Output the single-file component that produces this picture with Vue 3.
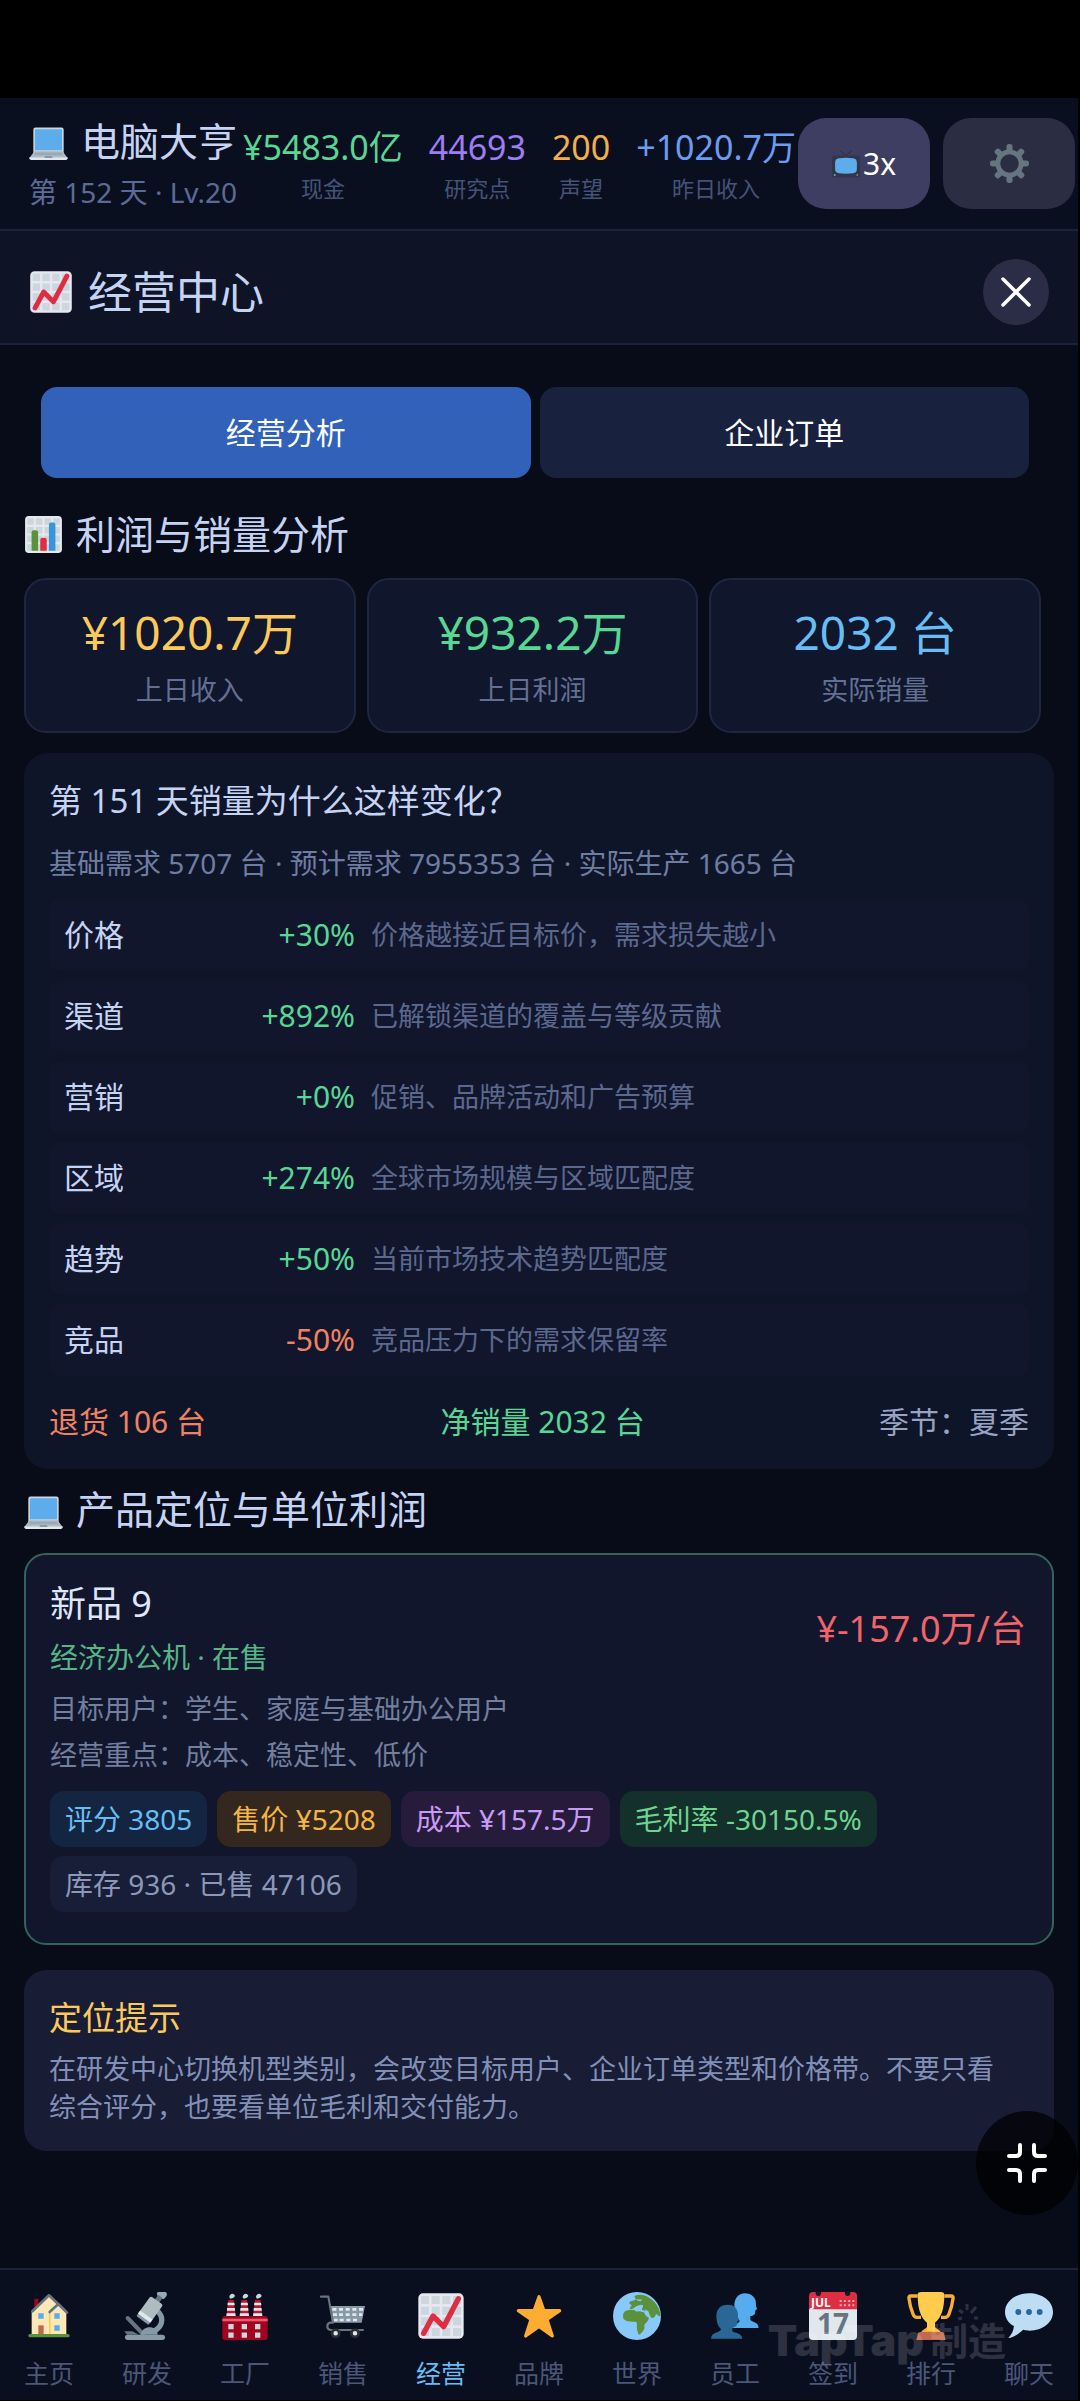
<template>
  <div class="screen">
    <svg class="sprite" aria-hidden="true">
      <symbol id="i-laptop" viewBox="0 -3 36 36">
        <path fill="#ccd6dd" d="M32 26a2 2 0 0 1-2 2H6a2 2 0 0 1-2-2V5a2 2 0 0 1 2-2h24a2 2 0 0 1 2 2z" />
        <path fill="#5dadec" d="M5.500 5.500Q5.500 4.500 6.500 4.500H29.500Q30.500 4.500 30.500 5.500V24H5.500z" />
        <path fill="#aebbc1" d="M5 25h26l4.500 6h-35z" />
        <path fill="#e1e8ed" d="M.3 30.500h35.400a2 2 0 0 1-2 2.500H2.300a2 2 0 0 1-2-2.500z" />
        <path fill="#9aaab4" d="M6 26h24l1.500 2.500h-27z" />
        <path fill="#8899a6" d="M15 29.300h6l.8 1.900h-7.600z" />
      </symbol>
      <symbol id="i-trend" viewBox="0 0 36 36">
        <rect x="1" y="1" width="34" height="34" rx="3.500" fill="#e6e7f0" />
        <path fill="#ccd6dd" d="M3 3h6v6H3zm8 0h6v6h-6zm8 0h6v6h-6zm8 0h6v6h-6zM3 11h6v6H3zm8 0h6v6h-6zm8 0h6v6h-6zm8 0h6v6h-6zM3 19h6v6H3zm8 0h6v6h-6zm8 0h6v6h-6zm8 0h6v6h-6zM3 27h6v6H3zm8 0h6v6h-6zm8 0h6v6h-6zm8 0h6v6h-6z" />
        <path fill="none" stroke="#dd2e44" stroke-width="4" stroke-linecap="round" stroke-linejoin="round" d="M5 31 12 18 20 26 31 5" />
      </symbol>
      <symbol id="i-bars" viewBox="0 0 36 36">
        <rect x="1" y="1" width="34" height="34" rx="3.500" fill="#e6e9ee" />
        <path fill="#ccd6dd" d="M3 3h6v6H3zm8 0h6v6h-6zm8 0h6v6h-6zm8 0h6v6h-6zM3 11h6v6H3zm8 0h6v6h-6zm8 0h6v6h-6zm8 0h6v6h-6zM3 19h6v6H3zm8 0h6v6h-6zm8 0h6v6h-6zm8 0h6v6h-6zM3 27h6v6H3zm8 0h6v6h-6zm8 0h6v6h-6zm8 0h6v6h-6z" />
        <path fill="#5c913b" d="M13 33H7V16a2 2 0 0 1 2-2h2a2 2 0 0 1 2 2z" />
        <path fill="#dd2e44" d="M21 33h-6V23a2 2 0 0 1 2-2h2a2 2 0 0 1 2 2z" />
        <path fill="#3b94d9" d="M29 33h-6V9a2 2 0 0 1 2-2h2a2 2 0 0 1 2 2z" />
      </symbol>
      <symbol id="i-tv" viewBox="0 0 36 36">
        <path fill="none" stroke="#31373d" stroke-width="1.500" stroke-linecap="round" d="M11 1l7 6 7-6" />
        <rect x="0" y="7" width="36" height="28" rx="3" fill="#31374a" />
        <path fill="#5dadec" d="M9 10.500q9-1 18 0 5 .5 5 6v8q0 5-5 5.500-9 1-18 0-5-.5-5-5.500v-8q0-5.500 5-6z" />
        <circle cx="3.500" cy="32" r="1.300" fill="#8899a6" />
        <circle cx="32.500" cy="32" r="1.300" fill="#a6794b" />
      </symbol>
      <symbol id="i-gear" viewBox="0 0 36 36">
        <g fill="#66757f">
          <rect v-for="a in [0, 45, 90, 135]" :key="a" x="15.200" y="0" width="5.600" height="36" rx="2.500" :transform="`rotate(${a} 18 18)`" />
          <circle cx="18" cy="18" r="13" />
        </g>
        <circle cx="18" cy="18" r="8.500" fill="#2b2e42" />
      </symbol>
      <symbol id="i-home" viewBox="0 0 36 36">
        <path fill="#a0041e" d="M7 8V5h3v6L7 13z" />
        <path fill="#ffe8b6" d="M5 14 18 2.500 31 14v19H5z" />
        <path fill="#ffcc4d" d="M18 14h1.200v19H18z" />
        <path fill="none" stroke="#66757f" stroke-width="2" stroke-linecap="round" stroke-linejoin="round" d="M5.500 14.500 18 2.500l9 8.500M18.500 15 25 9l6.500 6.500" />
        <path fill="#55acee" d="M10 16h4v4h-4zm12 0h4v4h-4zm0 9h4v4h-4z" />
        <path fill="#c1694f" d="M10 25h4v7h-4z" />
        <rect x="2.500" y="31.500" width="31" height="2.500" rx="1.200" fill="#5c913b" />
      </symbol>
      <symbol id="i-scope" viewBox="0 0 36 36">
        <path fill="none" stroke="#66757f" stroke-width="3" stroke-linecap="round" d="M3.500 19.500 15 31.500" />
        <path fill="none" stroke="#8899a6" stroke-width="4" stroke-linecap="round" d="M27 15.500c4 5 2 11-4 14" />
        <path fill="#8899a6" d="M13 32c1-4 4-5.500 7-5.500s6 2 6 5.500z" />
        <rect x="1.500" y="32" width="30" height="4" rx="2" fill="#8899a6" />
        <path fill="#66757f" d="M1 29.500h6l5 2.500H3z" />
        <g transform="rotate(36 19 14)">
          <rect x="16.500" y="-5" width="7" height="6" rx="2.500" fill="#99aab5" />
          <rect x="18" y="0" width="4" height="5" fill="#66757f" />
          <rect x="14" y="4" width="11.500" height="17" rx="1.500" fill="#aebbc1" />
          <rect x="14" y="17.500" width="11.500" height="3" fill="#e1e8ed" />
          <rect x="14" y="20.500" width="11.500" height="2" rx="1" fill="#8899a6" />
        </g>
      </symbol>
      <symbol id="i-factory" viewBox="0 0 36 36">
        <path fill="#be1931" d="M5.500 6h4l1.500 13H4zm10 0h4l1.500 13h-7zm10 0h4l1.500 13h-7z" />
        <path fill="#e1e8ed" d="M5 8h5l.3 2H4.800zm10 0h5l.3 2h-5.500zm10 0h5l.3 2h-5.500zM4.600 12h5.800l.2 2H4.400zm10 0h5.800l.2 2h-6.200zm10 0h5.800l.2 2h-6.200zM4.200 16h6.600l.2 2H4zm10 0h6.600l.2 2h-7zm10 0h6.600l.2 2h-7z" />
        <path fill="#ccd6dd" d="M7 5a2 2 0 1 1 3-3c1 1 0 2-1 2.500zm10 0a2 2 0 1 1 3-3c1 1 0 2-1 2.500zm10 0a2 2 0 1 1 3-3c1 1 0 2-1 2.500z" />
        <rect x="1" y="18" width="34" height="18" rx="2" fill="#a0041e" />
        <rect x="1" y="20" width="34" height="2" fill="#ea596e" />
        <path fill="#ccd6dd" d="M5.500 24h4v4h-4zm10 0h4v4h-4zm10 0h4v4h-4zm-20 6.300h4v4h-4zm10 0h4v4h-4zm10 0h4v4h-4z" />
      </symbol>
      <symbol id="i-cart" viewBox="0 0 36 36">
        <path fill="#8899a6" d="M8 10.500h26.500L32 23H10z" />
        <path fill="#e1e8ed" d="M10 12h3v2h-3zm5 0h3v2h-3zm5 0h3v2h-3zm5 0h3v2h-3zm5 0h3v2h-3zM10.500 16h3v2h-3zm4.500 0h3v2h-3zm5 0h3v2h-3zm5 0h3v2h-3zm5 0h2.500v2H30zM11 20h3v2h-3zm4.500 0h3v2h-3zm5 0h3v2h-3zm5 0h3v2h-3z" />
        <path fill="none" stroke="#66757f" stroke-width="1.600" stroke-linecap="round" stroke-linejoin="round" d="M1.500 3.500H7L10.500 23H8.500a2.800 2.800 0 0 0 0 5.500H33" />
        <g fill="#e1e8ed" stroke="#292f33" stroke-width="2">
          <circle cx="12.500" cy="31" r="2.700" />
          <circle cx="27" cy="31" r="2.700" />
        </g>
      </symbol>
      <symbol id="i-star" viewBox="0 0 36 36">
        <path fill="#ffac33" stroke="#ffac33" stroke-width="2.400" stroke-linejoin="round" d="M18 3.500 21.700 14H33.500L24 20.600 28 33 18 25.800 8 33l4-12.400L2.500 14h11.800z" />
      </symbol>
      <symbol id="i-globe" viewBox="0 0 36 36">
        <circle cx="18" cy="18" r="18" fill="#88c9f9" />
        <path fill="#5c913b" d="M9 14.500c2-1.500 5-1 7-1 1 1 2 1.500 3 1s3 .5 4 .5c1 2 2 3.500 4 4.500-.5 2-2 3.500-3.500 5 0 2 .5 2.500-.5 4-1 1.500-2 3-3.500 3.500-1-1-1-2.500-1.500-4.500s.5-3-.5-5c-2-.5-4 0-6-.5-2-.500-4-1.500-4-3.500S8 15.500 9 14.500z" />
        <path fill="#5c913b" d="M16 3c4-1.500 8-1 10.500 1 5 2.500 8.500 8 9.300 14-1.300.8-2.300-1-3.300-1.500-1 1-1.500 3.500-3 3-2-.5-2-3.500-4-5-1 0-2-1-3.500-1-1-.5 1-2 .5-3.500-1.500-1-3 0-4.500.5s-3 2.500-5 2.500c-1-.5.500-2 1-3-1-1-2.500-1.500-1.500-2.500s3.500-.5 4.500-2z" />
        <path fill="#88c9f9" d="M17 5.500c2-.5 3 .5 5 0l-1 1.500c-2 0-3-.5-4-1.500zM24 13l2.500 1.500 1.500 4-2-1.500z" />
      </symbol>
      <symbol id="i-staff" viewBox="0 0 36 36">
        <path fill="#55acee" d="M16 27c1-4 5-3 5.500-5.500C19 19 17.500 14 17.500 10c0-5 3-9 8-9 4 0 7.500 2.500 8 6 .5 2-.2 3 .8 5 .4 1-.4 1.500-1.100 1.700.2 3.300-1.200 4.300-3.700 4.300v3c2 2 6 1.500 6.200 6z" />
        <path fill="#2a6797" d="M0 35c.5-5.500 7-4 7.500-7C5 25.500 4 22 4 18c0-5 3-8.500 8.500-8.500 4.500 0 7 2.500 7.500 6 .5 2-.2 3 .8 5 .4 1-.4 1.500-1.100 1.700.3 3.300-1.200 4.300-3.700 4.300v3c2 1.500 7 1 7.500 5.500z" />
      </symbol>
      <symbol id="i-date" viewBox="0 0 36 36">
        <path fill="#e1e8ed" d="M0 11h36v22a3 3 0 0 1-3 3H3a3 3 0 0 1-3-3z" />
        <path fill="#dd2e44" d="M3 0h30a3 3 0 0 1 3 3v10H0V3a3 3 0 0 1 3-3z" />
        <path fill="#141828" d="M5 0h4v1a2 2 0 0 1-4 0zm22 0h4v1a2 2 0 0 1-4 0z" />
        <path fill="#f4abba" d="M23 6h1.500v1.500H23zm3.200 0h1.500v1.500h-1.500zm3.200 0h1.500v1.500h-1.500zm3.200 0H34v1.500h-1.500zM23 9.200h1.500v1.500H23zm3.200 0h1.500v1.500h-1.500zm3.200 0h1.500v1.500h-1.500zm3.200 0H34v1.500h-1.500z" />
        <text x="1.500" y="11" font-size="9" font-weight="700" fill="#fff">JUL</text>
        <text x="18" y="31.500" font-size="21" font-weight="700" text-anchor="middle" fill="#66757f">17</text>
      </symbol>
      <symbol id="i-cup" viewBox="0 0 36 36">
        <path fill="none" stroke="#ffac33" stroke-width="2.500" stroke-linejoin="round" d="M8 3H3c-2 0-1.500 1-1.500 2 .5 4 1.500 8 3 11.500.5 1.500 1 2.500 3 2.500h3M28 3h5c2 0 1.500 1 1.500 2-.5 4-1.500 8-3 11.500-.5 1.500-1 2.500-3 2.500h-3" />
        <path fill="#ffac33" d="M15 20h6v6c1 2 4 2 4.500 5h-15c.5-3 3.500-3 4.500-5z" />
        <path fill="#ffcc4d" d="M8 2c0-1.500 1-2 3-2h14c2 0 3 .5 3 2 0 10-2 17-7 21v6h-6v-6C10 19 8 12 8 2z" />
        <path fill="#c1694f" d="M10 30h16a2 2 0 0 1 2 2l1 4H7l1-4a2 2 0 0 1 2-2z" />
      </symbol>
      <symbol id="i-chat" viewBox="0 0 36 36">
        <path fill="#bdddf4" d="M18 1c10 0 18 6 18 14s-8 14-17.500 14c-2 0-3.500-.3-5-.7C11 31 6 34.500 2.500 34.500c2.500-2.500 4-5.500 4.200-9C2.500 23.500 0 19.500 0 15 0 7 8 1 18 1z" />
        <g fill="#2a6797">
          <circle cx="10" cy="15" r="2.200" />
          <circle cx="18" cy="15" r="2.200" />
          <circle cx="26" cy="15" r="2.200" />
        </g>
      </symbol>
    </svg>

    <div class="app">
      <header class="topbar">
        <div class="brand">
          <h1><svg class="emoji"><use href="#i-laptop" /></svg>电脑大亨</h1>
          <p>第 152 天 · Lv.20</p>
        </div>
        <div class="stats">
          <div v-for="s in stats" :key="s.label" class="stat">
            <span class="stat-value" :class="s.tone">{{ s.value }}</span>
            <span class="stat-label">{{ s.label }}</span>
          </div>
        </div>
        <div class="actions">
          <button class="action speed" type="button"><svg class="emoji"><use href="#i-tv" /></svg>3x</button>
          <button class="action" type="button" aria-label="设置"><svg class="emoji"><use href="#i-gear" /></svg></button>
        </div>
      </header>

      <div class="titlebar">
        <h2><svg class="emoji"><use href="#i-trend" /></svg>经营中心</h2>
        <button class="close" type="button" aria-label="关闭">
          <svg viewBox="0 0 30 30"><path d="M2 2 28 28M28 2 2 28" /></svg>
        </button>
      </div>

      <main class="content">
        <div class="tabs">
          <button
            v-for="tab in tabs"
            :key="tab"
            type="button"
            class="tab"
            :class="{ 'tab-active': tab === activeTab }"
            @click="activeTab = tab"
          >
            {{ tab }}
          </button>
        </div>

        <h3 class="section"><svg class="emoji"><use href="#i-bars" /></svg>利润与销量分析</h3>

        <div class="cards">
          <div v-for="c in cards" :key="c.label" class="card">
            <span class="card-value" :class="c.tone">{{ c.value }}</span>
            <span class="card-label">{{ c.label }}</span>
          </div>
        </div>

        <section class="panel">
          <h4>第 151 天销量为什么这样变化？</h4>
          <p class="summary">基础需求 5707 台 · 预计需求 7955353 台 · 实际生产 1665 台</p>
          <table class="factors">
            <tbody>
              <tr v-for="f in factors" :key="f.name">
                <th scope="row">{{ f.name }}</th>
                <td class="factor-value" :class="f.value.startsWith('-') ? 'orange' : 'green'">{{ f.value }}</td>
                <td class="factor-note">{{ f.note }}</td>
              </tr>
            </tbody>
          </table>
          <div class="totals">
            <span class="orange">退货 106 台</span>
            <span class="green">净销量 2032 台</span>
            <span>季节：夏季</span>
          </div>
        </section>

        <h3 class="section"><svg class="emoji"><use href="#i-laptop" /></svg>产品定位与单位利润</h3>

        <article class="product">
          <div class="product-head">
            <div>
              <h4>新品 9</h4>
              <p class="product-type">经济办公机 · 在售</p>
            </div>
            <span class="product-profit">¥-157.0万/台</span>
          </div>
          <p class="product-line">目标用户：学生、家庭与基础办公用户</p>
          <p class="product-line">经营重点：成本、稳定性、低价</p>
          <div class="chips">
            <span v-for="chip in chips" :key="chip.text" class="chip" :class="chip.kind">{{ chip.text }}</span>
          </div>
        </article>

        <section class="tip">
          <h4>定位提示</h4>
          <p>在研发中心切换机型类别，会改变目标用户、企业订单类型和价格带。不要只看综合评分，也要看单位毛利和交付能力。</p>
        </section>
      </main>

      <nav class="nav">
        <a v-for="n in nav" :key="n.icon" href="#" :class="{ current: n.label === '经营' }">
          <svg class="emoji"><use :href="'#i-' + n.icon" /></svg>
          <span>{{ n.label }}</span>
        </a>
      </nav>

      <div class="watermark">
        <b>TapTap</b><span>制造</span>
        <svg viewBox="0 0 24 20"><path d="M3 8l4 3M11 2v6M20 5l-5 6M2 17l4-1M18 16h4" /></svg>
      </div>

      <button class="shrink" type="button" aria-label="退出全屏">
        <svg viewBox="0 0 40 40"><path d="M2 13h7q4 0 4-4V2M38 13h-7q-4 0-4-4V2M2 27h7q4 0 4 4v7M38 27h-7q-4 0-4 4v7" /></svg>
      </button>
    </div>
  </div>
</template>

<script setup>
import { ref } from 'vue'

const tabs = ['经营分析', '企业订单']
const activeTab = ref(tabs[0])

const stats = [
  { value: '¥5483.0亿', label: '现金', tone: 'green' },
  { value: '44693', label: '研究点', tone: 'purple' },
  { value: '200', label: '声望', tone: 'amber' },
  { value: '+1020.7万', label: '昨日收入', tone: 'blue' }
]

const cards = [
  { value: '¥1020.7万', label: '上日收入', tone: 'gold' },
  { value: '¥932.2万', label: '上日利润', tone: 'green' },
  { value: '2032 台', label: '实际销量', tone: 'sky' }
]

const factors = [
  { name: '价格', value: '+30%', note: '价格越接近目标价，需求损失越小' },
  { name: '渠道', value: '+892%', note: '已解锁渠道的覆盖与等级贡献' },
  { name: '营销', value: '+0%', note: '促销、品牌活动和广告预算' },
  { name: '区域', value: '+274%', note: '全球市场规模与区域匹配度' },
  { name: '趋势', value: '+50%', note: '当前市场技术趋势匹配度' },
  { name: '竞品', value: '-50%', note: '竞品压力下的需求保留率' }
]

const chips = [
  { text: '评分 3805', kind: 'chip-blue' },
  { text: '售价 ¥5208', kind: 'chip-amber' },
  { text: '成本 ¥157.5万', kind: 'chip-purple' },
  { text: '毛利率 -30150.5%', kind: 'chip-green' },
  { text: '库存 936 · 已售 47106', kind: 'chip-grey' }
]

const nav = [
  { icon: 'home', label: '主页' },
  { icon: 'scope', label: '研发' },
  { icon: 'factory', label: '工厂' },
  { icon: 'cart', label: '销售' },
  { icon: 'trend', label: '经营' },
  { icon: 'star', label: '品牌' },
  { icon: 'globe', label: '世界' },
  { icon: 'staff', label: '员工' },
  { icon: 'date', label: '签到' },
  { icon: 'cup', label: '排行' },
  { icon: 'chat', label: '聊天' }
]
</script>

<style>
body {
  margin: 0;
  background: #000;
}
</style>

<style scoped>
.screen {
  box-sizing: border-box;
  min-height: 100vh;
  padding: 98px 2px 1px 0;
  display: flex;
  flex-direction: column;
  background: #000;
  color: #c5d3f5;
  font-family: "Noto Sans", "Noto Sans CJK SC", sans-serif;
  font-size: 27px;
}

.sprite {
  display: none;
}

.app {
  position: relative;
  flex: 1;
  display: flex;
  flex-direction: column;
  background: #080c18;
}

h1, h2, h3, h4, p {
  margin: 0;
  font-weight: 400;
}

button {
  padding: 0;
  border: 0;
  color: #fff;
  font: inherit;
  font-size: 30px;
  line-height: 40px;
}

.emoji {
  flex: none;
  width: 39px;
  height: 39px;
}

.green { color: #58d694; }
.purple { color: #9c7df2; }
.amber { color: #f2ae49; }
.blue { color: #6c9cf0; }
.gold { color: #fcc95a; }
.sky { color: #67bdf5; }
.orange { color: #ef8262; }

.topbar {
  display: flex;
  align-items: center;
  padding: 14px 3px 14px 29px;
  border-bottom: 2px solid #1b233b;
  background: #0a0f20;
}

.brand {
  flex: 0 0 214px;
  white-space: nowrap;
}

.brand h1 {
  display: flex;
  align-items: center;
  gap: 13px;
  font-size: 39px;
  line-height: 57px;
}

.brand p {
  color: #5c6b95;
  font-size: 28px;
  line-height: 46px;
}

.stats {
  flex: 1;
  display: flex;
  justify-content: space-between;
  white-space: nowrap;
}

.stat {
  display: flex;
  flex-direction: column;
  align-items: center;
}

.stat-value {
  font-size: 34px;
  line-height: 48px;
}

.stat-label {
  color: #465378;
  font-size: 22px;
  line-height: 34px;
}

.actions {
  flex: none;
  display: flex;
  gap: 13px;
  margin-left: 2px;
}

.action {
  display: flex;
  align-items: center;
  justify-content: center;
  gap: 3px;
  width: 132px;
  height: 91px;
  border-radius: 28px;
  background: #2b2e42;
}

.speed {
  background: #3e3e63;
}

.speed .emoji {
  width: 28px;
  height: 30px;
}

.titlebar {
  display: flex;
  align-items: center;
  justify-content: space-between;
  padding: 28px 29px 18px;
  border-bottom: 2px solid #1b233b;
  background: #0f1326;
}

.titlebar h2 {
  display: flex;
  align-items: center;
  gap: 15px;
  font-size: 44px;
  line-height: 66px;
}

.titlebar .emoji {
  width: 44px;
  height: 44px;
}

.close {
  display: flex;
  align-items: center;
  justify-content: center;
  width: 66px;
  height: 66px;
  border-radius: 50%;
  background: #2b2c45;
}

.close svg {
  width: 30px;
  height: 30px;
  fill: none;
  stroke: #fff;
  stroke-width: 3.500;
  stroke-linecap: round;
}

.content {
  flex: 1;
  padding: 42px 24px;
}

.tabs {
  display: flex;
  gap: 9px;
  margin: 0 25px 32px 17px;
}

.tab {
  flex: 1;
  height: 91px;
  border-radius: 16px;
  background: #18213d;
}

.tab-active {
  background: #3161b9;
}

.section {
  display: flex;
  align-items: center;
  gap: 13px;
  margin: 16px 0 20px;
  font-size: 39px;
  line-height: 48px;
}

.cards {
  display: flex;
  gap: 11px;
  margin: 0 13px 20px 0;
}

.card {
  flex: 1;
  display: flex;
  flex-direction: column;
  align-items: center;
  gap: 10px;
  padding: 22px 0 23px;
  border: 2px solid #1e2642;
  border-radius: 22px;
  background: #10162c;
}

.card-value {
  font-size: 46px;
  line-height: 60px;
}

.card-label {
  color: #646f94;
  line-height: 36px;
}

.panel {
  padding: 24px 25px 25px;
  border-radius: 24px;
  background: #0f1529;
}

.panel h4,
.tip h4 {
  font-size: 33px;
  line-height: 48px;
}

.summary {
  margin-top: 20px;
  color: #6f7da3;
  font-size: 28px;
  line-height: 36px;
}

.factors {
  width: 100%;
  margin-top: 9px;
  border-spacing: 0 9px;
}

.factors th,
.factors td {
  height: 72px;
  padding: 0;
  background: #11162d;
  line-height: 40px;
}

.factors th {
  width: 120px;
  padding-left: 15px;
  border-radius: 12px 0 0 12px;
  font-size: 30px;
  font-weight: 400;
  text-align: left;
}

.factors .factor-value {
  width: 171px;
  font-size: 30px;
  text-align: right;
}

.factors .factor-note {
  padding-left: 16px;
  border-radius: 0 12px 12px 0;
  color: #5c688e;
}

.totals {
  display: flex;
  justify-content: space-between;
  margin-top: 15px;
  color: #98a3c4;
  font-size: 30px;
  line-height: 44px;
}

.totals .green { color: #58d694; }
.totals .orange { color: #ef8262; }

.product {
  padding: 21px 26px 31px 24px;
  border: 2px solid #346359;
  border-radius: 22px;
  background: #11162d;
}

.product-head {
  display: flex;
  align-items: center;
  justify-content: space-between;
  margin-bottom: 4px;
}

.product-head h4 {
  color: #dfe6fb;
  font-size: 36px;
  line-height: 56px;
}

.product-type {
  color: #56b585;
  font-size: 28px;
  line-height: 50px;
}

.product-profit {
  color: #f0646a;
  font-size: 36px;
  line-height: 56px;
}

.product-line {
  color: #727f9f;
  line-height: 46px;
}

.chips {
  display: flex;
  flex-wrap: wrap;
  gap: 9px 10px;
  margin-top: 13px;
}

.chip {
  padding: 0 15px;
  border-radius: 14px;
  font-size: 28px;
  line-height: 56px;
}

.chip-blue { background: #132541; color: #67bdf5; }
.chip-amber { background: #33271e; color: #f3b545; }
.chip-purple { background: #271b3c; color: #c79bf5; }
.chip-green { background: #13302a; color: #6fd391; }
.chip-grey { background: #181e37; color: #8c98ba; }

.tip {
  margin-top: 25px;
  padding: 24px 25px 25px;
  border-radius: 22px;
  background: #181c35;
}

.tip h4 {
  color: #fcc95a;
}

.tip p {
  margin-top: 8px;
  padding-right: 28px;
  color: #8290b8;
  line-height: 38px;
}

.nav {
  display: flex;
  padding: 22px 0 9px;
  border-top: 2px solid #1b233b;
  background: #0a0f20;
}

.nav a {
  flex: 1;
  display: flex;
  flex-direction: column;
  align-items: center;
  gap: 15px;
  color: #4b5678;
  font-size: 25px;
  line-height: 36px;
  text-decoration: none;
}

.nav .emoji {
  width: 48px;
  height: 48px;
}

.nav .current {
  color: #67bdf5;
}

.watermark {
  position: absolute;
  right: 72px;
  bottom: 38px;
  display: flex;
  align-items: center;
  gap: 6px;
  color: #fff;
  font-size: 38px;
  font-weight: 700;
  line-height: 44px;
  opacity: 0.14;
  pointer-events: none;
}

.watermark b {
  font-family: Inter, sans-serif;
  font-size: 43px;
  font-weight: 900;
}

.watermark svg {
  position: absolute;
  right: 26px;
  top: -16px;
  width: 24px;
  height: 20px;
  fill: none;
  stroke: #fff;
  stroke-width: 3;
}

.shrink {
  position: absolute;
  right: 0;
  bottom: 185px;
  display: flex;
  align-items: center;
  justify-content: center;
  width: 102px;
  height: 104px;
  border-radius: 50%;
  background: rgba(0, 0, 0, 0.7);
}

.shrink svg {
  width: 40px;
  height: 40px;
  fill: none;
  stroke: #fff;
  stroke-width: 4;
  stroke-linecap: round;
}
</style>
